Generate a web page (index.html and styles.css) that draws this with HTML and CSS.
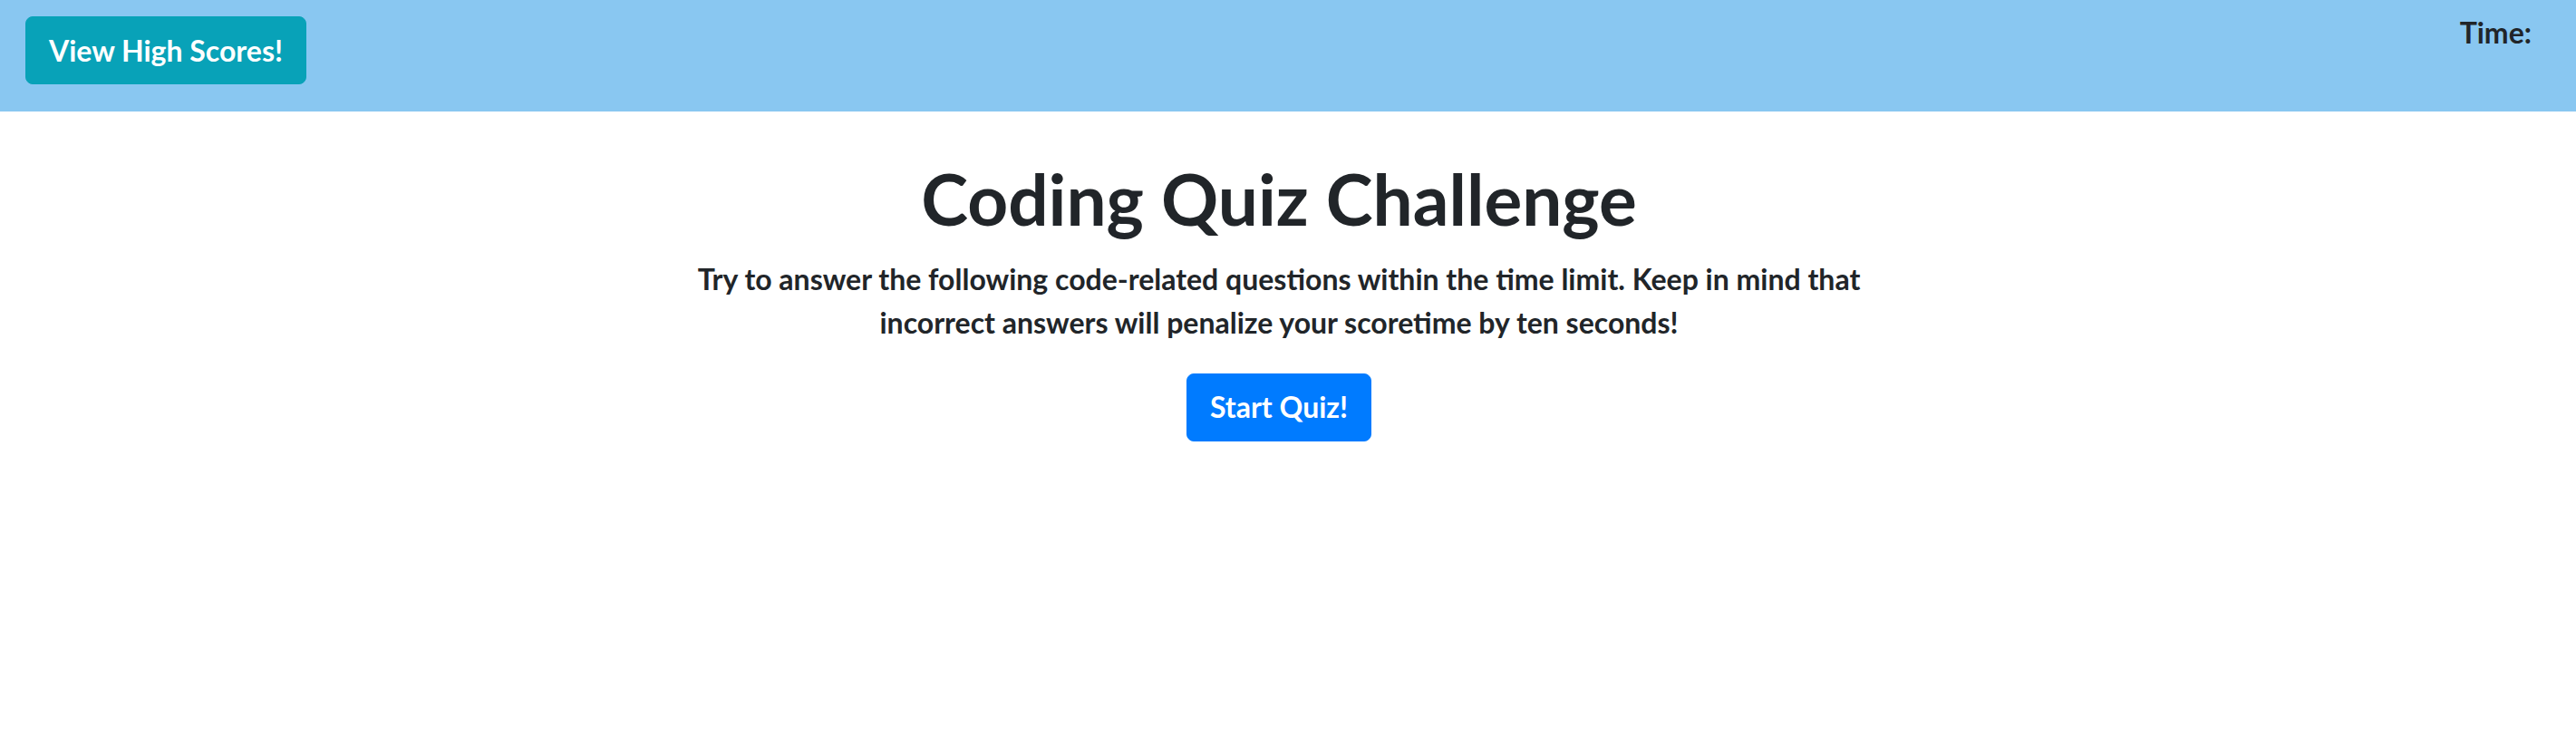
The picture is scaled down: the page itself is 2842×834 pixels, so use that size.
FILE: index.html
```html
<!DOCTYPE html>
<html lang="en">
<head>
<meta charset="utf-8">
<title>Coding Quiz Challenge</title>
<link rel="stylesheet" href="styles.css">
</head>
<body>
<header class="topbar">
  <button class="btn btn-info" type="button">View High Scores!</button>
  <div class="timer">Time:</div>
</header>
<main class="intro">
  <h1 class="title">Coding Quiz Challenge</h1>
  <p class="lead">Try to answer the following code-related questions within the time limit. Keep in mind that incorrect answers will penalize your scoretime by ten seconds!</p>
  <button class="btn btn-primary" type="button">Start Quiz!</button>
</main>
</body>
</html>
```
FILE: styles.css
```css
* { box-sizing: border-box; }
html, body { margin: 0; padding: 0; }
body {
  background: #ffffff;
  color: #212529;
  font-family: "Lato", "Open Sans", sans-serif;
  font-weight: 700;
  font-size: 32px;
  line-height: 48px;
}
.topbar {
  display: flex;
  justify-content: space-between;
  align-items: flex-start;
  height: 123px;
  padding: 12px 49px 0 28px;
  background: #89c7f1;
}
.btn {
  font-family: inherit;
  font-weight: 700;
  font-size: 32px;
  line-height: 48px;
  padding: 12.5px 25px;
  border: 1px solid transparent;
  border-radius: 8px;
  color: #ffffff;
  cursor: pointer;
}
.btn-info {
  margin-top: 6px;
  background: #08a2b8;
  border-color: #08a2b8;
}
.btn-primary {
  background: #007bff;
  border-color: #007bff;
}
.timer {
  color: #212529;
}
.intro {
  display: flex;
  flex-direction: column;
  align-items: center;
  text-align: center;
  padding: 50px 20px 0 0;
}
.title {
  margin: 0 0 17px;
  font-size: 78.3px;
  line-height: 1.2;
  font-weight: 700;
}
.lead {
  margin: 0 0 32px;
  max-width: 1300px;
}
```
